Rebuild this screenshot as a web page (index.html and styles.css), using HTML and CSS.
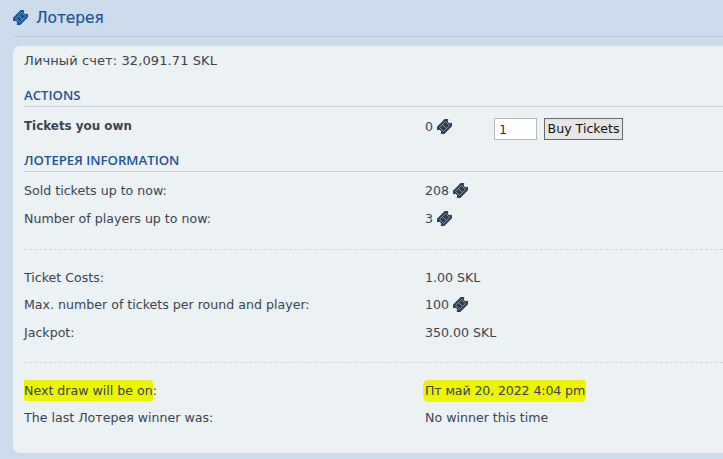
FILE: index.html
```html
<!DOCTYPE html>
<html lang="ru">
<head>
    <meta charset="UTF-8">
    <meta name="viewport" content="width=device-width, initial-scale=1.0">
    <title>Лотерея</title>
    <link rel="stylesheet" href="styles.css">
</head>
<body>
    <svg class="defs" width="0" height="0">
        <symbol id="ticket" viewBox="0 0 16 16">
            <g transform="rotate(-45 8 8)">
                <path d="M0 2.5H16V6a2 2 0 0 0 0 4V13.5H0V10a2 2 0 0 0 0-4Z"/>
                <path class="perf" d="M3.5 5H12.5V11H3.5ZM8 5V11"/>
            </g>
        </symbol>
    </svg>

    <h1 class="page-title">
        <svg class="icon title-icon"><use href="#ticket"/></svg>
        Лотерея
    </h1>

    <div class="panel">
        <p class="balance">Личный счет: 32,091.71 SKL</p>

        <h2 class="section-head">Actions</h2>
        <div class="row row-own">
            <strong>Tickets you own</strong>
            <div class="buy">
                <span class="own-count">0 <svg class="icon"><use href="#ticket"/></svg></span>
                <input class="qty" type="text" value="1">
                <button class="buy-btn">Buy Tickets</button>
            </div>
        </div>

        <h2 class="section-head">Лотерея Information</h2>
        <div class="rows">
            <div class="row"><span>Sold tickets up to now:</span><span>208 <svg class="icon"><use href="#ticket"/></svg></span></div>
            <div class="row"><span>Number of players up to now:</span><span>3 <svg class="icon"><use href="#ticket"/></svg></span></div>

            <hr class="dots">

            <div class="row"><span>Ticket Costs:</span><span>1.00 SKL</span></div>
            <div class="row"><span>Max. number of tickets per round and player:</span><span>100 <svg class="icon"><use href="#ticket"/></svg></span></div>
            <div class="row"><span>Jackpot:</span><span>350.00 SKL</span></div>

            <hr class="dots dots-low">

            <div class="row"><span><mark>Next draw will be on</mark>:</span><span><mark class="date">Пт май 20, 2022 4:04 pm</mark></span></div>
            <div class="row"><span>The last Лотерея winner was:</span><span>No winner this time</span></div>
        </div>
    </div>
</body>
</html>
```

FILE: styles.css
```css
body {
    margin: 0;
    height: 459px;
    overflow: hidden;
    background-color: #cddcec;
    font-family: "DejaVu Sans", Verdana, sans-serif;
    font-size: 12.6px;
    color: #3a4450;
}

.defs {
    display: block;
}

.icon {
    width: 15px;
    height: 15px;
    vertical-align: -3px;
    fill: #2c3e52;
}

.perf {
    fill: none;
    stroke: #8d9cab;
    stroke-width: 0.9;
}

.page-title {
    margin: 0 0 0 13px;
    height: 37px;
    box-sizing: border-box;
    padding-top: 8px;
    border-bottom: 1px solid #bccbdc;
    font-size: 15.4px;
    font-weight: normal;
    line-height: 20px;
    color: #1c5494;
    -webkit-text-stroke: 0.2px #1c5494;
}

.title-icon {
    fill: #1c5494;
    margin-right: 3px;
    vertical-align: -2px;
}

.panel {
    margin: 9px 0 0 13px;
    height: 407px;
    box-sizing: border-box;
    padding: 6px 0 0 11px;
    background-color: #ecf1f4;
    border-radius: 7px 0 0 7px;
}

.balance {
    margin: 0 0 15px;
    font-size: 13px;
    letter-spacing: 0.1px;
    line-height: 18px;
}

.section-head {
    margin: 0;
    height: 21px;
    border-bottom: 1px solid #c6ced6;
    font-family: "Open Sans", sans-serif;
    font-size: 13.2px;
    font-weight: 600;
    line-height: 20px;
    text-transform: uppercase;
    color: #1c5494;
}

.rows {
    margin-top: 5px;
}

.row {
    display: grid;
    grid-template-columns: 401px 1fr;
    height: 27.5px;
    line-height: 27px;
}

.row-own {
    height: 43px;
}

.row-own strong {
    font-size: 11.9px;
    line-height: 38px;
}

.buy {
    display: flex;
    align-items: flex-start;
    padding-top: 11px;
}

.own-count {
    width: 69px;
    line-height: 18px;
}

.qty {
    width: 43px;
    height: 22px;
    box-sizing: border-box;
    padding: 0 4px;
    border: 1px solid #b5b8ba;
    font: inherit;
    color: #333;
    background-color: #fff;
}

.buy-btn {
    margin-left: 7px;
    width: 79px;
    height: 22px;
    padding: 0;
    border: 1px solid #66686a;
    background-color: #e6e6e6;
    font: inherit;
    line-height: 18px;
    color: #111;
}

.dots {
    margin: 16.5px 0 14px;
    border: 0;
    border-top: 1px dashed #cfd6dc;
}

.dots-low {
    margin: 16px 0 13.5px;
}

mark {
    background-color: #ecf400;
    color: inherit;
    padding: 3px 0;
    border-radius: 1px 3px 2px 3px;
}

.date {
    margin-left: -2px;
    padding: 3px 1px 4px 2px;
    letter-spacing: -0.12px;
    border-radius: 5px 3px 5px 6px;
}
```
